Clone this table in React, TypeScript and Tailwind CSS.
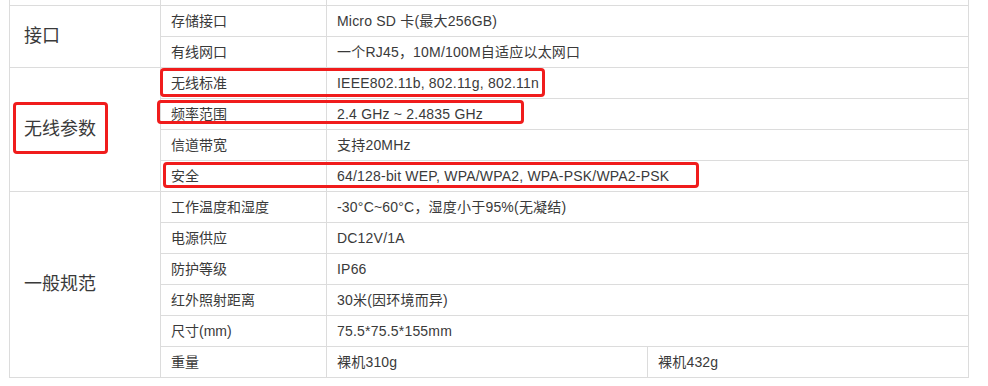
import React from "react";

type Row = { label: string; value: string; extra?: string };
type Group = { title: string; rows: Row[] };

const groups: Group[] = [
  {
    title: "接口",
    rows: [
      { label: "存储接口", value: "Micro SD 卡(最大256GB)" },
      { label: "有线网口", value: "一个RJ45，10M/100M自适应以太网口" },
    ],
  },
  {
    title: "无线参数",
    rows: [
      { label: "无线标准", value: "IEEE802.11b, 802.11g, 802.11n" },
      { label: "频率范围", value: "2.4 GHz ~ 2.4835 GHz" },
      { label: "信道带宽", value: "支持20MHz" },
      { label: "安全", value: "64/128-bit WEP, WPA/WPA2, WPA-PSK/WPA2-PSK" },
    ],
  },
  {
    title: "一般规范",
    rows: [
      { label: "工作温度和湿度", value: "-30°C~60°C，湿度小于95%(无凝结)" },
      { label: "电源供应", value: "DC12V/1A" },
      { label: "防护等级", value: "IP66" },
      { label: "红外照射距离", value: "30米(因环境而异)" },
      { label: "尺寸(mm)", value: "75.5*75.5*155mm" },
      { label: "重量", value: "裸机310g", extra: "裸机432g" },
    ],
  },
];

const spanClass: Record<number, string> = {
  2: "row-span-2",
  4: "row-span-4",
  6: "row-span-6",
};

const cell = "bg-white flex items-center pl-[10px] text-[14px] text-[#3a3a3a] whitespace-nowrap";
const valueCell = cell + " tracking-[0.2px]";

function Mark({ className }: { className: string }) {
  return (
    <div
      className={
        "absolute border-[3px] border-[#f01c1c] rounded-[4px] pointer-events-none " + className
      }
    />
  );
}

export default function App() {
  return (
    <div
      className="relative w-[988px] h-[386px] bg-white overflow-hidden"
      style={{ fontFamily: '"Liberation Sans", "Noto Sans CJK SC", sans-serif' }}
    >
      <div className="ml-[9px] w-fit grid grid-cols-[150px_165px_320px_320px] grid-rows-[5px_repeat(12,30px)] gap-px bg-[#dcdcdc] px-px pb-px">
        {/* tail of the row above */}
        <div className="bg-white" />
        <div className="bg-white" />
        <div className="bg-white col-span-2" />

        {groups.map((g) => (
          <React.Fragment key={g.title}>
            <div
              className={
                "bg-white flex items-center pl-[14px] text-[18px] text-[#3a3a3a] " +
                spanClass[g.rows.length]
              }
            >
              {g.title}
            </div>
            {g.rows.map((r) => (
              <React.Fragment key={r.label}>
                <div className={cell}>{r.label}</div>
                {r.extra ? (
                  <>
                    <div className={valueCell}>{r.value}</div>
                    <div className={valueCell}>{r.extra}</div>
                  </>
                ) : (
                  <div className={valueCell + " col-span-2"}>{r.value}</div>
                )}
              </React.Fragment>
            ))}
          </React.Fragment>
        ))}
      </div>

      {/* red annotation boxes */}
      <Mark className="left-[160px] top-[68px] w-[385px] h-[29px]" />
      <Mark className="left-[157px] top-[100px] w-[367px] h-[24px]" />
      <Mark className="left-[13px] top-[102px] w-[95px] h-[52px]" />
      <Mark className="left-[163px] top-[162px] w-[536px] h-[26px]" />
    </div>
  );
}
